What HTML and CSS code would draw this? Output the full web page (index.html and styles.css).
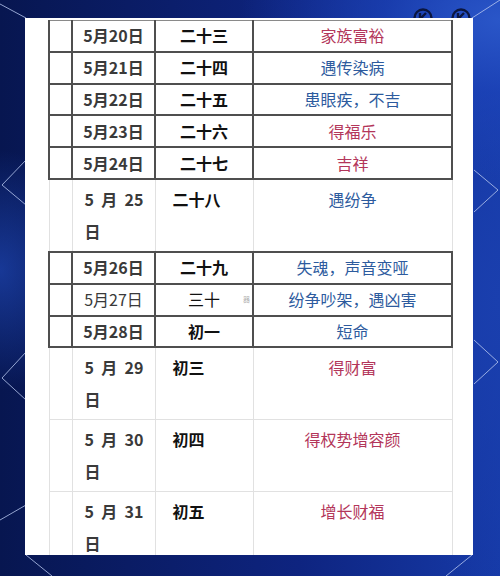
FILE: index.html
```html
<!DOCTYPE html>
<html lang="zh">
<head>
<meta charset="utf-8">
<link rel="stylesheet" href="styles.css">
</head>
<body>
<div class="stage">
  <svg class="backdrop" width="500" height="576" viewBox="0 0 500 576">
    <g stroke="#b8c8f0" stroke-width="1" fill="none" opacity="0.8">
      <line x1="0" y1="4" x2="26" y2="18"/>
      <line x1="472" y1="18" x2="500" y2="0"/>
      <polyline points="26,160 2,185 26,205"/>
      <polyline points="26,352 2,378 26,400"/>
      <polyline points="474,170 498,190 474,212"/>
      <polyline points="474,340 498,362 474,384"/>
      <line x1="26" y1="555" x2="52" y2="576"/>
      <line x1="472" y1="555" x2="446" y2="576"/>
      <line x1="0" y1="520" x2="26" y2="505"/>
    </g>
    <g stroke="#0b1640" stroke-width="2.4" fill="none">
      <circle cx="423" cy="18" r="8.5"/>
      <path d="M420 13 L420 22 M420 19 L426 13 M422 18 L426 22"/>
      <circle cx="461" cy="18" r="8.5"/>
      <path d="M458 13 L458 22 M458 19 L464 13 M460 18 L464 22"/>
    </g>
  </svg>
  <div class="panel">
    <table class="cal">
      <colgroup>
        <col class="c0"><col class="c1"><col class="c2"><col class="c3">
      </colgroup>
      <tr class="dark"><td></td><td class="date">5月20日</td><td class="lunar">二十三</td><td class="note red">家族富裕</td></tr>
      <tr class="dark"><td></td><td class="date">5月21日</td><td class="lunar">二十四</td><td class="note blue">遇传染病</td></tr>
      <tr class="dark"><td></td><td class="date">5月22日</td><td class="lunar">二十五</td><td class="note blue">患眼疾，不吉</td></tr>
      <tr class="dark"><td></td><td class="date">5月23日</td><td class="lunar">二十六</td><td class="note red">得福乐</td></tr>
      <tr class="dark"><td></td><td class="date">5月24日</td><td class="lunar">二十七</td><td class="note red">吉祥</td></tr>
      <tr class="tall"><td></td><td class="date"><div class="spread"><span>5</span><span>月</span><span>25</span></div><div>日</div></td><td class="lunar">二十八</td><td class="note blue">遇纷争</td></tr>
      <tr class="dark"><td></td><td class="date">5月26日</td><td class="lunar">二十九</td><td class="note blue">失魂，声音变哑</td></tr>
      <tr class="dark plain"><td></td><td class="date">5月27日</td><td class="lunar">三十<span class="mark">器</span></td><td class="note blue">纷争吵架，遇凶害</td></tr>
      <tr class="dark"><td></td><td class="date">5月28日</td><td class="lunar">初一</td><td class="note blue">短命</td></tr>
      <tr class="tall"><td></td><td class="date"><div class="spread"><span>5</span><span>月</span><span>29</span></div><div>日</div></td><td class="lunar">初三</td><td class="note red">得财富</td></tr>
      <tr class="tall"><td></td><td class="date"><div class="spread"><span>5</span><span>月</span><span>30</span></div><div>日</div></td><td class="lunar">初四</td><td class="note red">得权势增容颜</td></tr>
      <tr class="tall"><td></td><td class="date"><div class="spread"><span>5</span><span>月</span><span>31</span></div><div>日</div></td><td class="lunar">初五</td><td class="note red">增长财福</td></tr>
    </table>
  </div>
</div>
</body>
</html>
```

FILE: styles.css
```css
html, body {
  margin: 0;
  padding: 0;
}

body {
  width: 500px;
  height: 576px;
  overflow: hidden;
  font-family: "Noto Sans CJK SC", "Noto Sans", sans-serif;
}

.stage {
  position: relative;
  width: 500px;
  height: 576px;
  overflow: hidden;
  background:
    radial-gradient(ellipse 260px 160px at 500px 20px, #2a56c8 0%, rgba(30,70,190,0.6) 45%, rgba(20,50,150,0) 100%),
    radial-gradient(ellipse 120px 300px at 500px 300px, #1a3fae 0%, rgba(20,50,160,0) 100%),
    radial-gradient(ellipse 90px 120px at 0px 270px, rgba(40,90,220,0.5) 0%, rgba(20,50,160,0) 100%),
    linear-gradient(90deg, #071650 0%, #0e2480 60%, #163aa8 100%);
  padding: 18px 0 0 25px;
  box-sizing: border-box;
}

.backdrop {
  position: absolute;
  left: 0;
  top: 0;
}

.panel {
  position: relative;
  width: 448px;
  height: 537px;
  background: #ffffff;
  box-sizing: border-box;
  padding: 2px 0 0 23px;
  overflow: hidden;
}

.cal {
  border-collapse: collapse;
  width: 403px;
  table-layout: fixed;
  font-size: 16px;
}

.c0 { width: 23px; }
.c1 { width: 83px; }
.c2 { width: 98px; }
.c3 { width: 199px; }

.cal td {
  padding: 0;
  text-align: center;
  vertical-align: middle;
  white-space: nowrap;
}

.dark td {
  border: 2px solid #4f4f4f;
  height: 29.8px;
  line-height: 29px;
}

.dark:first-child td {
  border-top: 1px solid #8a8a8a;
}

.tall td {
  border: 1px solid #e1e1e1;
  height: 68px;
  padding-top: 3px;
  line-height: 32px;
  vertical-align: top;
}

.date {
  font-weight: 700;
  color: #3a3a3a;
}

.lunar {
  font-weight: 700;
  color: #111111;
  position: relative;
}

.tall .date {
  text-align: left;
  padding-left: 12px;
  padding-right: 11px;
}

.tall .lunar {
  text-align: left;
  padding-left: 17px;
}

.spread {
  display: flex;
  justify-content: space-between;
}

.plain .date,
.plain .lunar {
  font-weight: 400;
}

.mark {
  position: absolute;
  right: 2px;
  top: 0;
  font-size: 7px;
  font-weight: 400;
  color: #b0b0b0;
}

.note {
  font-weight: 400;
}

.red { color: #b3365a; }
.blue { color: #2d5b9e; }
```
